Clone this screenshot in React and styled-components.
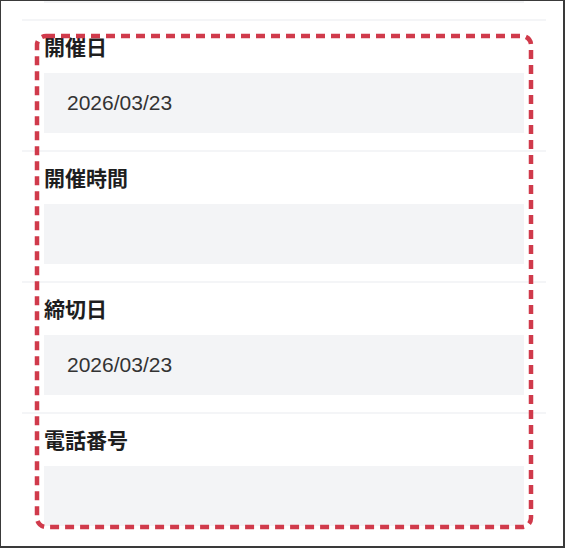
import React from "react";
import styled, { createGlobalStyle } from "styled-components";

const GlobalStyle = createGlobalStyle`
  html, body {
    margin: 0;
    padding: 0;
    background: #ffffff;
  }
  body {
    font-family: "Liberation Sans", "Noto Sans CJK JP", sans-serif;
  }
`;

const Frame = styled.div`
  position: relative;
  box-sizing: border-box;
  width: 565px;
  height: 548px;
  overflow: hidden;
  background: #ffffff;
  border-top: 1px solid #3a3a3a;
  border-left: 1px solid #3a3a3a;
  border-right: 2px solid #3a3a3a;
  border-bottom: 2px solid #3a3a3a;
`;

const List = styled.div`
  display: flex;
  flex-direction: column;
  padding: 0 17px 0 21px;
`;

const PrevTail = styled.div`
  padding: 0 22px 16px;
`;

const TailBox = styled.div`
  height: 2px;
  background: #f3f4f6;
`;

const Section = styled.div`
  display: flex;
  flex-direction: column;
  border-top: 2px solid #f4f5f7;
  padding: 10px 22px 17px;
`;

const Label = styled.label`
  font-family: "Noto Sans CJK JP", sans-serif;
  font-size: 21px;
  font-weight: 700;
  line-height: 30px;
  color: #1e1e1e;
  margin-bottom: 12px;
`;

const Field = styled.input`
  box-sizing: border-box;
  width: 100%;
  height: 60px;
  border: none;
  outline: none;
  padding: 0 23px;
  background: #f3f4f6;
  font-family: "Liberation Sans", "Noto Sans CJK JP", sans-serif;
  font-size: 21px;
  color: #333333;
`;

const Highlight = styled.svg`
  position: absolute;
  left: 33px;
  top: 32px;
  pointer-events: none;
`;

const fields = [
  { label: "開催日", value: "2026/03/23" },
  { label: "開催時間", value: "" },
  { label: "締切日", value: "2026/03/23" },
  { label: "電話番号", value: "" },
];

function App() {
  return (
    <>
      <GlobalStyle />
      <Frame>
        <List>
          <PrevTail>
            <TailBox />
          </PrevTail>
          {fields.map((f) => (
            <Section key={f.label}>
              <Label>{f.label}</Label>
              <Field type="text" value={f.value} readOnly />
            </Section>
          ))}
        </List>
        <Highlight width="500" height="498" viewBox="0 0 500 498">
          <rect
            x="3"
            y="3"
            width="494"
            height="491"
            rx="9"
            ry="9"
            fill="none"
            stroke="#d03a4b"
            strokeWidth="4.5"
            strokeDasharray="9 6"
          />
        </Highlight>
      </Frame>
    </>
  );
}

export default App;
